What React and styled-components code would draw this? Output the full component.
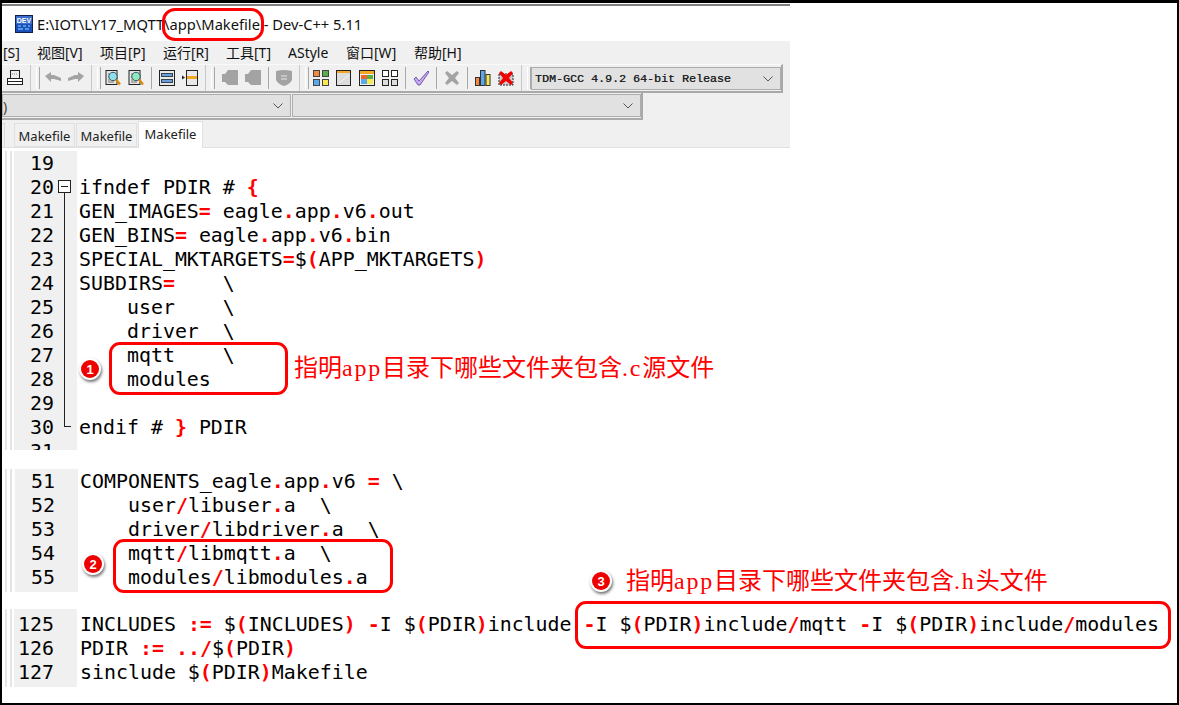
import React from "react";
import styled, { createGlobalStyle } from "styled-components";

const Global = createGlobalStyle`
  html, body { margin: 0; padding: 0; background: #fff; }
  * { box-sizing: border-box; }
`;

const UI = `"Noto Sans", "Noto Sans CJK SC", sans-serif`;
const MONO = `"DejaVu Sans Mono", monospace`;
const RED = "#ff0000";

const Page = styled.div`
  position: relative;
  width: 1179px;
  height: 705px;
  overflow: hidden;
`;
const Frame = styled.div`
  height: 705px;
  border: solid #000;
  border-width: 3px 2px 2px 2px;
  background: #fff;
`;
const IdeWindow = styled.div`
  width: 788px;
  margin-top: 1px;
  border-top: 2px solid #7f7f7f;
`;
const TitleBar = styled.div`
  height: 35px;
  display: flex;
  align-items: center;
  padding-left: 12px;
  gap: 4px;
  font: 14.7px ${UI};
  color: #111;
`;
const MenuBar = styled.div`
  height: 23px;
  background: #f0f0f0;
  display: flex;
  align-items: center;
  padding: 1px 0 0 1px;
  gap: 13px;
  font: 14px/22px ${UI};
  color: #111;
  white-space: nowrap;
`;
const MenuItem = styled.span`
  width: ${(p) => p.$w}px;
`;
const Docks = styled.div`
  background: #f0f0f0;
`;
const StripOne = styled.div`
  width: 781px;
  height: 29px;
  display: flex;
  align-items: center;
  border-top: 1px solid #fafafa;
  border-right: 2px solid #a9a9a9;
  border-bottom: 2px solid #a9a9a9;
  padding-left: 1px;
`;
const Cell = styled.span`
  width: 23px;
  height: 16px;
  flex: none;
  display: flex;
  justify-content: center;
`;
const Sep = styled.span`
  width: 8px;
  height: 22px;
  flex: none;
  display: flex;
  justify-content: center;
  &::before {
    content: "";
    width: 1px;
    background: #a8a8a8;
  }
`;
const Grip = styled.span`
  width: ${(p) => p.$w}px;
  height: 26px;
  flex: none;
  position: relative;
  &::before {
    content: "";
    position: absolute;
    left: 4px;
    top: 0;
    bottom: 0;
    width: 1px;
    background: #c8c8c8;
  }
  &::after {
    content: "";
    position: absolute;
    left: 10px;
    top: 2px;
    bottom: 2px;
    width: 2px;
    border-left: 1px solid #fff;
    border-right: 1px solid #a8a8a8;
  }
`;
const Combo = styled.div`
  width: ${(p) => p.$w}px;
  height: ${(p) => p.$h}px;
  flex: none;
  background: #e1e1e1;
  border: 1px solid #adadad;
  display: flex;
  align-items: center;
  justify-content: space-between;
  padding: 1px 7px 0 3px;
  font: 11.67px "Liberation Mono", monospace;
  color: #222;
  text-shadow: 0.3px 0 0 #444;
  white-space: pre;
`;
const ClippedValue = styled.span`
  margin-left: -3px;
  font: 14px ${UI};
  text-shadow: none;
  color: #444;
`;
const Chevron = styled.svg`
  width: 10px;
  height: 6px;
  flex: none;
`;
const StripTwo = styled.div`
  width: 641px;
  height: 27px;
  display: flex;
  align-items: center;
  gap: 1px;
  border-right: 2px solid #a9a9a9;
  border-bottom: 2px solid #a9a9a9;
`;
const TabRow = styled.div`
  height: 28px;
  display: flex;
  align-items: flex-end;
  gap: 1px;
  border-bottom: 1px solid #e0e0e0;
`;
const TabStub = styled.span`
  width: 3px;
  height: 24px;
  margin-right: 8px;
  border: solid #d9d9d9;
  border-width: 1px 1px 0 0;
`;
const Tab = styled.span`
  width: ${(p) => (p.$active ? 65 : 61)}px;
  height: ${(p) => (p.$active ? 27 : 24)}px;
  margin-bottom: ${(p) => (p.$active ? -1 : 0)}px;
  background: ${(p) => (p.$active ? "#fff" : "#f0f0f0")};
  border: 1px solid #e0e0e0;
  border-bottom: ${(p) => (p.$active ? "none" : "1px solid #e0e0e0")};
  display: flex;
  align-items: center;
  justify-content: center;
  padding-top: ${(p) => (p.$active ? 0 : 2)}px;
  padding-bottom: ${(p) => (p.$active ? 3 : 0)}px;
  font: 13px ${UI};
  color: #222;
`;
const Section = styled.section`
  position: relative;
  display: flex;
  margin-top: ${(p) => p.$top}px;
  height: ${(p) => p.$h}px;
  overflow: hidden;
  font: 19.92px/24px ${MONO};
  color: #000;
`;
const Rail = styled.div`
  width: ${(p) => p.$w}px;
  flex: none;
  position: relative;
  &::before, &::after {
    content: "";
    position: absolute;
    top: 0;
    bottom: 0;
    width: 2px;
    background: #e4e4e4;
  }
  &::before { left: 3px; }
  &::after { left: 8px; }
`;
const Gutter = styled.div`
  width: ${(p) => p.$w}px;
  flex: none;
  background: #f0f0f0;
  padding: ${(p) => p.$pad}px 23px 0 0;
  text-align: right;
`;
const CodeCol = styled.div`
  padding: ${(p) => p.$pad}px 0 0 ${(p) => p.$left}px;
`;
const Line = styled.div`
  height: 24px;
  white-space: pre;
`;
const Op = styled.span`
  color: ${RED};
  font-weight: 700;
`;
const FoldBox = styled.span`
  position: absolute;
  left: 56px;
  top: 29px;
  width: 13px;
  height: 13px;
  background: #fff;
  border: 1px solid #222;
  &::after {
    content: "";
    position: absolute;
    left: 2px;
    right: 2px;
    top: 5px;
    height: 1px;
    background: #222;
  }
`;
const FoldLine = styled.span`
  position: absolute;
  left: 62px;
  top: 42px;
  width: 7px;
  height: 234px;
  border-left: 1px solid #222;
  border-bottom: 1px solid #222;
`;
const Ring = styled.div`
  position: absolute;
  left: ${(p) => p.$x}px;
  top: ${(p) => p.$y}px;
  width: ${(p) => p.$w}px;
  height: ${(p) => p.$h}px;
  border: 3px solid ${RED};
  border-radius: ${(p) => p.$r}px;
`;
const Note = styled.div`
  position: absolute;
  left: ${(p) => p.$x}px;
  top: ${(p) => p.$y}px;
  font: 24px/30px "Liberation Serif", "Noto Sans CJK SC", serif;
  color: ${RED};
  white-space: nowrap;
`;
const Latin = styled.span`
  letter-spacing: 1.8px;
`;
const Badge = styled.div`
  position: absolute;
  left: ${(p) => p.$x - 11}px;
  top: ${(p) => p.$y - 11}px;
  width: 22px;
  height: 22px;
  border-radius: 50%;
  background: #fff;
  box-shadow: 1px 2px 3px rgba(0, 0, 0, 0.55);
  display: flex;
  align-items: center;
  justify-content: center;
  &::before {
    content: "";
    position: absolute;
    inset: 2px;
    border-radius: 50%;
    background: #ee0000;
  }
`;
const BadgeNum = styled.span`
  position: relative;
  font: 700 13px/1 "Liberation Sans", sans-serif;
  color: #fff;
`;

function Code({ text }) {
  const parts = text.split(/(:=|[=.{}()\/\-])/);
  return (
    <Line>
      {parts.map((t, i) => (i % 2 ? <Op key={i}>{t}</Op> : t))}
    </Line>
  );
}

const G = "#a3a3a3";
const K = "#222";
const drawings = {
  printer: (
    <>
      <rect x="3.500" y="0.500" width="9" height="8" fill="#eee" stroke={K} />
      <path d="M5 4h1M7 4h1M9 4h1" stroke="#888" />
      <rect x="0.500" y="8.500" width="15" height="6" fill="#fff" stroke={K} />
      <path d="M1 11.500h14" stroke={K} />
    </>
  ),
  undo: <path d="M0 6l6-4v3h3l7 3v3l-7-2H6v3z" fill={G} />,
  redo: <path d="M16 6l-6-4v3H7L0 8v3l7-2h3v3z" fill={G} />,
  findA: (
    <>
      <rect x="1" y="0.500" width="11" height="14" fill="#e6e6e6" stroke={K} />
      <path d="M3 4h2M3 7h1M3 10h2M3 12h6" stroke="#777" />
      <circle cx="8" cy="6.500" r="4.200" fill="#8fe0ea" stroke="#356" />
      <path d="M11 9.500l4 5" stroke="#d98a10" strokeWidth="2.400" />
    </>
  ),
  findB: (
    <>
      <rect x="1" y="0.500" width="11" height="14" fill="#e6e6e6" stroke={K} />
      <path d="M3 4h2M3 7h1M3 10h2M3 12h6" stroke="#777" />
      <circle cx="8" cy="6.500" r="4.200" fill="#90e8c0" stroke="#356" />
      <path d="M11 9.500l4 5" stroke="#d98a10" strokeWidth="2.400" />
    </>
  ),
  rows: (
    <>
      <rect x="0.500" y="0.500" width="15" height="15" fill="#e8e8e8" stroke={K} />
      <rect x="2.500" y="3.500" width="11" height="3" fill="#6d9ed8" stroke="#345" />
      <rect x="2.500" y="9.500" width="11" height="3" fill="#6d9ed8" stroke="#345" />
    </>
  ),
  insert: (
    <>
      <rect x="4.500" y="0.500" width="11" height="15" fill="#e8e8e8" stroke={K} />
      <rect x="5" y="6" width="10" height="3" fill="#f0a820" />
      <path d="M0 5.500l3 2-3 2z" fill={K} />
    </>
  ),
  bookA: <path d="M6 0h10v15H6L3 12H0V4h3z" fill={G} />,
  bookB: <path d="M6 0h10v15H6L3 12H0V4h3z" fill={G} />,
  shield: (
    <>
      <path d="M0 1q8-2 16 0v9q-2 4-8 6q-6-2-8-6z" fill={G} />
      <path d="M5 6h6M5 9h6" stroke="#e8e8e8" />
    </>
  ),
  tiles: (
    <>
      <rect x="0.500" y="0.500" width="6" height="6" fill="#f58a3c" stroke="#444" />
      <rect x="9.500" y="0.500" width="6" height="6" fill="#55b04a" stroke="#444" />
      <rect x="0.500" y="9.500" width="6" height="6" fill="#5aa7ea" stroke="#444" />
      <rect x="9.500" y="9.500" width="6" height="6" fill="#f7ea50" stroke="#444" />
    </>
  ),
  pane: (
    <>
      <rect x="0.500" y="0.500" width="14" height="15" fill="#ddd" stroke={K} />
      <rect x="1" y="1" width="13" height="2" fill="#f5a623" />
      <path d="M3 13L13 5" stroke="#f4f4f4" />
    </>
  ),
  colors: (
    <>
      <rect x="0.500" y="0.500" width="15" height="15" fill="#eee" stroke={K} />
      <rect x="1" y="1" width="14" height="3" fill="#f5a623" />
      <rect x="2" y="5" width="6" height="4" fill="#f0652c" />
      <rect x="8" y="5" width="6" height="4" fill="#55b04a" />
      <rect x="2" y="9" width="6" height="5" fill="#5aa7ea" />
      <rect x="8" y="9" width="6" height="5" fill="#f7ea50" />
    </>
  ),
  grid: (
    <>
      <rect x="0.500" y="0.500" width="6" height="6" fill="#fff" stroke={K} />
      <rect x="9.500" y="0.500" width="6" height="6" fill="#fff" stroke={K} />
      <rect x="0.500" y="9.500" width="6" height="6" fill="#ddd" stroke={K} />
      <rect x="9.500" y="9.500" width="6" height="6" fill="#ddd" stroke={K} />
    </>
  ),
  check: <path d="M1 9l2-2 3 4L15 1l1 1-9 13h-2z" fill="#c9a7f5" stroke="#5a3f96" strokeWidth="0.800" />,
  cross: <path d="M3 1l5 4 5-4 2 2-4 5 4 5-2 2-5-4-5 4-2-2 4-5-4-5z" fill={G} />,
  bars: (
    <>
      <rect x="0.500" y="7.500" width="4" height="8" fill="#f58a3c" stroke="#333" />
      <rect x="5.500" y="0.500" width="4.500" height="15" fill="#5aa7ea" stroke="#333" />
      <rect x="11" y="4.500" width="4" height="11" fill="#f7ea50" stroke="#333" />
    </>
  ),
  del: (
    <>
      <rect x="1" y="4" width="14" height="11" fill="#ccc" stroke={K} strokeDasharray="2 1" />
      <path d="M3 1l5 4 5-4 2 2-4 5 4 5-2 2-5-4-5 4-2-2 4-5-4-5z" fill="#f00000" />
    </>
  ),
};

const IconSvg = styled.svg`
  width: 16px;
  height: 16px;
  display: block;
`;

const Tool = ({ name }) => (
  <Cell>
    <IconSvg viewBox="0 0 16 16">{drawings[name]}</IconSvg>
  </Cell>
);

const Down = () => (
  <Chevron viewBox="0 0 10 6">
    <path d="M0.500 0.500L5 5l4.500-4.500" fill="none" stroke="#555" />
  </Chevron>
);

const LogoSvg = styled.svg`
  width: 18px;
  height: 18px;
  flex: none;
  margin-left: 1px;
`;
const Logo = () => (
  <LogoSvg viewBox="0 0 18 18">
    <rect x="0.500" y="0.500" width="17" height="17" fill="#1d4fb8" stroke="#10204c" />
    <rect x="1" y="1" width="16" height="8" fill="#3b6fc9" />
    <text x="9" y="7.800" fontFamily="Liberation Sans, sans-serif" fontSize="7" fontWeight="700" fill="#fff" textAnchor="middle">DEV</text>
    <path d="M3 11h3M8 11h3M13 11h2M3 14h5M10 14h4" stroke="#62b2f0" strokeWidth="1.500" />
  </LogoSvg>
);

const sec1Nums = [19, 20, 21, 22, 23, 24, 25, 26, 27, 28, 29, 30, 31];
const sec1 = [
  "",
  "ifndef PDIR # {",
  "GEN_IMAGES= eagle.app.v6.out",
  "GEN_BINS= eagle.app.v6.bin",
  "SPECIAL_MKTARGETS=$(APP_MKTARGETS)",
  "SUBDIRS=    \\",
  "    user    \\",
  "    driver  \\",
  "    mqtt    \\",
  "    modules",
  "",
  "endif # } PDIR",
];
const sec2Nums = [51, 52, 53, 54, 55];
const sec2 = [
  "COMPONENTS_eagle.app.v6 = \\",
  "    user/libuser.a  \\",
  "    driver/libdriver.a  \\",
  "    mqtt/libmqtt.a  \\",
  "    modules/libmodules.a",
];
const sec3Nums = [125, 126, 127];
const sec3 = [
  "INCLUDES := $(INCLUDES) -I $(PDIR)include -I $(PDIR)include/mqtt -I $(PDIR)include/modules",
  "PDIR := ../$(PDIR)",
  "sinclude $(PDIR)Makefile",
];

function CodeSection({ top, h, rail, gutter, pad, left, nums, lines, children }) {
  return (
    <Section $top={top} $h={h}>
      <Rail $w={rail} />
      <Gutter $w={gutter} $pad={pad}>
        {nums.map((n) => (
          <Line key={n}>{n}</Line>
        ))}
      </Gutter>
      <CodeCol $pad={pad} $left={left}>
        {lines.map((l, i) => (
          <Code key={i} text={l} />
        ))}
      </CodeCol>
      {children}
    </Section>
  );
}

export default function App() {
  return (
    <Page>
      <Global />
      <Frame>
        <IdeWindow>
          <TitleBar>
            <Logo />
            <span>E:\IOT\LY17_MQTT\app\Makefile - Dev-C++ 5.11</span>
          </TitleBar>
          <MenuBar>
            <MenuItem $w={21}>[S]</MenuItem>
            <MenuItem $w={50}>视图[V]</MenuItem>
            <MenuItem $w={50}>项目[P]</MenuItem>
            <MenuItem $w={50}>运行[R]</MenuItem>
            <MenuItem $w={49}>工具[T]</MenuItem>
            <MenuItem $w={45}>AStyle</MenuItem>
            <MenuItem $w={55}>窗口[W]</MenuItem>
            <MenuItem $w={50}>帮助[H]</MenuItem>
          </MenuBar>
          <Docks>
            <StripOne>
              <Tool name="printer" />
              <Grip $w={15} />
              <Tool name="undo" />
              <Tool name="redo" />
              <Grip $w={14} />
              <Tool name="findA" />
              <Tool name="findB" />
              <Sep />
              <Tool name="rows" />
              <Tool name="insert" />
              <Grip $w={17} />
              <Tool name="bookA" />
              <Tool name="bookB" />
              <Sep />
              <Tool name="shield" />
              <Grip $w={14} />
              <Tool name="tiles" />
              <Tool name="pane" />
              <Tool name="colors" />
              <Tool name="grid" />
              <Sep />
              <Tool name="check" />
              <Sep />
              <Tool name="cross" />
              <Sep />
              <Tool name="bars" />
              <Tool name="del" />
              <Grip $w={14} />
              <Combo $w={250} $h={23}>
                <span>TDM-GCC 4.9.2 64-bit Release</span>
                <Down />
              </Combo>
            </StripOne>
            <StripTwo>
              <Combo $w={289} $h={23}>
                <ClippedValue>)</ClippedValue>
                <Down />
              </Combo>
              <Combo $w={349} $h={23}>
                <span />
                <Down />
              </Combo>
            </StripTwo>
            <TabRow>
              <TabStub />
              <Tab>Makefile</Tab>
              <Tab>Makefile</Tab>
              <Tab $active>Makefile</Tab>
            </TabRow>
          </Docks>
        </IdeWindow>
        <CodeSection top={3} h={299} rail={12} gutter={63} pad={1} left={2} nums={sec1Nums} lines={sec1}>
          <FoldBox />
          <FoldLine />
        </CodeSection>
        <CodeSection top={19} h={123} rail={13} gutter={63} pad={1} left={2} nums={sec2Nums} lines={sec2} />
        <CodeSection top={17} h={78} rail={12} gutter={63} pad={4} left={3} nums={sec3Nums} lines={sec3} />
      </Frame>
      <Ring $x={162} $y={8} $w={102} $h={33} $r={13} />
      <Ring $x={109} $y={342} $w={179} $h={53} $r={11} />
      <Ring $x={113} $y={539} $w={280} $h={54} $r={11} />
      <Ring $x={575} $y={601} $w={596} $h={48} $r={11} />
      <Badge $x={90} $y={369}><BadgeNum>1</BadgeNum></Badge>
      <Badge $x={93} $y={564}><BadgeNum>2</BadgeNum></Badge>
      <Badge $x={601} $y={581}><BadgeNum>3</BadgeNum></Badge>
      <Note $x={294} $y={353}>指明<Latin>app</Latin>目录下哪些文件夹包含<Latin>.c</Latin>源文件</Note>
      <Note $x={626} $y={566}>指明<Latin>app</Latin>目录下哪些文件夹包含<Latin>.h</Latin>头文件</Note>
    </Page>
  );
}
